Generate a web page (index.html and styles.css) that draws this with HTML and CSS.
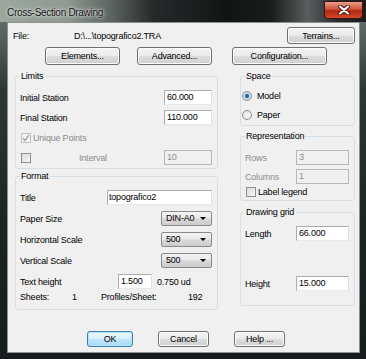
FILE: index.html
```html
<!DOCTYPE html>
<html lang="en">
<head>
    <meta charset="UTF-8">
    <title>Cross-Section Drawing</title>
    <link rel="stylesheet" href="styles.css">
</head>
<body>
    <div class="window">
        <div class="titlebar">
            <span class="title">Cross-Section Drawing</span>
            <span class="close">
                <svg width="14" height="10" viewBox="0 0 14 10">
                    <path d="M3 1.5 L11 8.5 M11 1.5 L3 8.5" stroke="#4a1010" stroke-width="4" stroke-linecap="round"/>
                    <path d="M3 1.5 L11 8.5 M11 1.5 L3 8.5" stroke="#ffffff" stroke-width="2.2" stroke-linecap="round"/>
                </svg>
            </span>
        </div>

        <div class="client">
            <div class="file-row">
                <span class="file-label">File:</span>
                <span class="file-path">D:\...\topografico2.TRA</span>
                <button class="btn terrains">Terrains...</button>
            </div>

            <div class="tool-row">
                <button class="btn w75">Elements...</button>
                <button class="btn w75 gap17">Advanced...</button>
                <button class="btn w95 gap20">Configuration...</button>
            </div>

            <div class="main">
                <div class="col-left">
                    <fieldset class="group limits">
                        <legend>Limits</legend>
                        <div class="row">
                            <span class="label">Initial Station</span>
                            <span class="field w48">60.000</span>
                        </div>
                        <div class="row">
                            <span class="label">Final Station</span>
                            <span class="field w48">110.000</span>
                        </div>
                        <div class="row">
                            <span class="check checked disabled">
                                <svg width="8" height="8" viewBox="0 0 8 8"><path d="M1 4 L3 6.5 L7 1" fill="none" stroke="#a8a8a8" stroke-width="1.4"/></svg>
                            </span>
                            <span class="label muted">Unique Points</span>
                        </div>
                        <div class="row">
                            <span class="check"></span>
                            <span class="label muted interval">Interval</span>
                            <span class="field w48 disabled">10</span>
                        </div>
                    </fieldset>

                    <fieldset class="group format">
                        <legend>Format</legend>
                        <div class="row">
                            <span class="label">Title</span>
                            <span class="field w105 tight">topografico2</span>
                        </div>
                        <div class="row">
                            <span class="label">Paper Size</span>
                            <span class="combo">DIN-A0<i class="arrow"></i></span>
                        </div>
                        <div class="row">
                            <span class="label">Horizontal Scale</span>
                            <span class="combo">500<i class="arrow"></i></span>
                        </div>
                        <div class="row">
                            <span class="label">Vertical Scale</span>
                            <span class="combo">500<i class="arrow"></i></span>
                        </div>
                        <div class="row">
                            <span class="label fixed98">Text height</span>
                            <span class="field w34">1.500</span>
                            <span class="ud">0.750 ud</span>
                        </div>
                        <div class="row sheets">
                            <span>Sheets:</span>
                            <span>1</span>
                            <span>Profiles/Sheet:</span>
                            <span>192</span>
                        </div>
                    </fieldset>
                </div>

                <div class="col-right">
                    <fieldset class="group space">
                        <legend>Space</legend>
                        <div class="row radio-row">
                            <span class="radio on"></span>
                            <span class="label">Model</span>
                        </div>
                        <div class="row radio-row">
                            <span class="radio"></span>
                            <span class="label">Paper</span>
                        </div>
                    </fieldset>

                    <fieldset class="group repr">
                        <legend>Representation</legend>
                        <div class="row">
                            <span class="label muted">Rows</span>
                            <span class="field w53 disabled">3</span>
                        </div>
                        <div class="row">
                            <span class="label muted">Columns</span>
                            <span class="field w53 disabled">1</span>
                        </div>
                        <div class="row small">
                            <span class="check"></span>
                            <span class="label">Label legend</span>
                        </div>
                    </fieldset>

                    <fieldset class="group grid">
                        <legend>Drawing grid</legend>
                        <div class="row">
                            <span class="label">Length</span>
                            <span class="field w53">66.000</span>
                        </div>
                        <div class="row height-row">
                            <span class="label">Height</span>
                            <span class="field w53">15.000</span>
                        </div>
                    </fieldset>
                </div>
            </div>

            <div class="footer">
                <button class="btn default ok">OK</button>
                <button class="btn w51">Cancel</button>
                <button class="btn w51">Help ...</button>
            </div>
        </div>
    </div>
</body>
</html>
```

FILE: styles.css
```css
body {
    margin: 0;
    padding: 0;
    font-family: "Liberation Sans", Arial, sans-serif;
    font-size: 9px;
    letter-spacing: -0.2px;
    color: #000;
    background: #1c2422;
}
.window {
    width: 366px;
    height: 359px;
    box-sizing: border-box;
    padding: 0 6px 6px 7px;
    background: linear-gradient(180deg, #6f7c76 0, #2c3835 25%, #1d2624 60%, #161c1c 100%);
    display: flex;
    flex-direction: column;
}
.titlebar {
    height: 22px;
    margin: 0 -6px 0 -7px;
    padding: 0 6px 0 7px;
    display: flex;
    align-items: center;
    justify-content: space-between;
    background: linear-gradient(90deg, #9aa69e 0, #8f9a93 18%, #5e6662 30%, #262a2a 42%, #121414 62%, #1a1c1c 74%, #5a5e5e 84%, #2a2c2c 92%, #1a1c1c 100%);
}
.title {
    font-size: 10px;
    letter-spacing: -0.3px;
    color: #111;
    text-shadow: 0 0 4px #e8eee8, 0 0 2px #e8eee8;
    padding-top: 2px;
}
.close {
    width: 37px;
    height: 16px;
    margin-right: -3px;
    align-self: flex-start;
    margin-top: 1px;
    border: 1px solid #3c1010;
    border-radius: 0 0 4px 4px;
    background: linear-gradient(180deg, #e8a08c 0, #d0533a 45%, #b02810 55%, #d04a28 100%);
    display: flex;
    align-items: center;
    justify-content: center;
}
.client {
    flex: 1;
    background: #f0f0f0;
    border: 1px solid #8c9090;
    box-sizing: border-box;
    padding: 4px 4px 0 4px;
    display: flex;
    flex-direction: column;
}
.btn {
    font-family: inherit;
    font-size: 9px;
    letter-spacing: -0.2px;
    color: #000;
    height: 18px;
    padding: 0;
    border: 1px solid #707070;
    border-radius: 3px;
    background: linear-gradient(180deg, #f4f4f4 0, #ebebeb 48%, #dddddd 52%, #cfcfcf 100%);
    box-shadow: inset 0 0 0 1px #fcfcfc;
}
.btn.default {
    border-color: #3c7fb1;
    background: linear-gradient(180deg, #eaf6fd 0, #d9f0fc 48%, #bee6fd 52%, #a7d9f5 100%);
    box-shadow: inset 0 0 0 1px #b8e4fb;
}
.file-row {
    height: 17px;
    display: flex;
    align-items: center;
}
.file-label {
    margin-left: 1px;
    width: 61px;
}
.file-path {
    flex: 1;
}
.terrains {
    width: 68px;
    height: 17px;
}
.tool-row {
    margin-top: 3px;
    display: flex;
    padding-left: 33px;
}
.w75 { width: 75px; }
.w95 { width: 95px; }
.w51 { width: 51px; }
.gap17 { margin-left: 17px; }
.gap20 { margin-left: 20px; }

.main {
    display: flex;
    margin-top: 6px;
    padding-left: 3px;
}
.col-left {
    width: 203px;
    display: flex;
    flex-direction: column;
}
.col-right {
    width: 115px;
    margin-left: 22px;
    display: flex;
    flex-direction: column;
}
.group {
    margin: 0;
    border: 1px solid #d5dfe5;
    border-radius: 3px;
    padding: 8px 5px 3px 4px;
    display: flex;
    flex-direction: column;
    gap: 5px;
}
.group legend {
    padding: 0 1px;
    margin-left: 0;
    line-height: 11px;
    height: 11px;
}
.row {
    height: 15px;
    display: flex;
    align-items: center;
}
.label {
    flex: 1;
    white-space: nowrap;
}
.muted {
    color: #8d8d8d;
}
.field {
    height: 15px;
    box-sizing: border-box;
    border: 1px solid #abadb3;
    border-right-color: #dbdfe6;
    border-bottom-color: #e3e9ef;
    background: #fff;
    padding: 0 2px;
    line-height: 13px;
    white-space: nowrap;
}
.field.tight { padding-left: 1px; }
.field.disabled {
    background: #f0f0f0;
    border-color: #b8b8b8;
    color: #8d8d8d;
}
.w48 { width: 48px; }
.w105 { width: 105px; }
.w34 { width: 34px; }
.w53 { width: 53px; }

.check {
    width: 10px;
    height: 10px;
    box-sizing: border-box;
    border: 1px solid #8e8f8f;
    background: linear-gradient(135deg, #dcdcdc 0, #f6f6f6 100%);
    margin: 0 2px 0 1px;
    display: flex;
    align-items: center;
    justify-content: center;
    flex: none;
}
.check.disabled {
    border-color: #c0c0c0;
    background: #f4f4f4;
}
.interval {
    flex: none;
    width: 131px;
    padding-left: 46px;
    box-sizing: border-box;
}
.format {
    margin-top: 2px;
    gap: 6px;
    padding-bottom: 5px;
}
.combo {
    width: 51px;
    height: 15px;
    box-sizing: border-box;
    border: 1px solid #8a8a8a;
    border-radius: 2px;
    background: linear-gradient(180deg, #f4f4f4 0, #e8e8e8 48%, #d8d8d8 52%, #cdcdcd 100%);
    padding-left: 4px;
    line-height: 13px;
    position: relative;
}
.arrow {
    position: absolute;
    right: 5px;
    top: 5px;
    width: 0;
    height: 0;
    border-left: 3px solid transparent;
    border-right: 3px solid transparent;
    border-top: 3px solid #000;
}
.fixed98 {
    flex: none;
    width: 98px;
}
.ud {
    margin-left: 5px;
}
.sheets {
    margin-top: -5px;
    height: 14px;
    display: grid;
    grid-template-columns: 52px 29px 87px auto;
}

.space {
    padding-top: 7px;
    padding-bottom: 3px;
}
.radio-row {
    height: 14px;
    margin-left: -3px;
}
.radio {
    width: 10px;
    height: 10px;
    box-sizing: border-box;
    border-radius: 50%;
    border: 1px solid #8e8f8f;
    background: radial-gradient(circle at 60% 60%, #f8f8f8 0, #dcdcdc 100%);
    margin-right: 5px;
}
.radio.on {
    background: radial-gradient(circle, #1d5a7c 0, #2d7aa0 30%, #bcd8e6 45%, #e6eef2 100%);
}
.repr {
    margin-top: 5px;
    gap: 4px;
    padding-bottom: 2px;
}
.row.small {
    height: 12px;
    margin-top: -2px;
}
.grid {
    margin-top: 6px;
    padding-bottom: 14px;
}
.height-row {
    margin-top: 30px;
}
.footer {
    margin-top: 21px;
    display: flex;
    padding-left: 75px;
    gap: 25px;
}
.footer .btn {
    height: 16px;
}
.ok {
    width: 46px;
}
```
